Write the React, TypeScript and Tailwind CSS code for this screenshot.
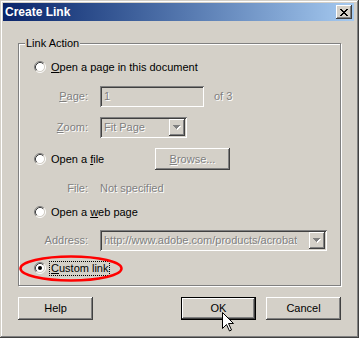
import type { ReactNode } from 'react'

const raised = 'bg-[#d4d0c8] shadow-[inset_-1px_-1px_#404040,inset_1px_1px_#fff,inset_-2px_-2px_#808080]'
const sunken = 'bg-[#d4d0c8] shadow-[inset_1px_1px_#808080,inset_-1px_-1px_#fff,inset_2px_2px_#404040,inset_-2px_-2px_#d4d0c8]'
const grayText = 'text-[#808080] [text-shadow:1px_1px_0_#fff]'

function Radio({ checked }: { checked?: boolean }) {
  return (
    <svg width="12" height="12" viewBox="0 0 12 12" className="shrink-0">
      <circle cx="6" cy="6" r="4.5" fill="#fff" />
      <path d="M2.11 9.89A5.5 5.5 0 0 1 9.89 2.11" fill="none" stroke="#808080" />
      <path d="M9.89 2.11A5.5 5.5 0 0 1 2.11 9.89" fill="none" stroke="#fff" />
      <path d="M2.82 9.18A4.5 4.5 0 0 1 9.18 2.82" fill="none" stroke="#404040" />
      <path d="M9.18 2.82A4.5 4.5 0 0 1 2.82 9.18" fill="none" stroke="#d4d0c8" />
      {checked && <circle cx="6" cy="6" r="2" fill="#000" />}
    </svg>
  )
}

function DropArrow() {
  const tri = 'h7v1h-1v1h-1v1h-1v1h-1v-1h-1v-1h-1v-1h-1z'
  return (
    <div className={`w-4 h-[17px] flex items-center justify-center shrink-0 ${raised}`}>
      <svg width="8" height="5" viewBox="0 0 8 5">
        <path d={`M1 1${tri}`} fill="#fff" />
        <path d={`M0 0${tri}`} fill="#808080" />
      </svg>
    </div>
  )
}

function CloseX() {
  const rows = ['xx....xx', '.xx..xx.', '..xxxx..', '...xx...', '..xxxx..', '.xx..xx.', 'xx....xx']
  return (
    <svg width="8" height="7" viewBox="0 0 8 7" shapeRendering="crispEdges">
      {rows.flatMap((r, y) =>
        r.split('').map((c, x) => (c === 'x' ? <rect key={`${x}-${y}`} x={x} y={y} width="1" height="1" fill="#000" /> : null)),
      )}
    </svg>
  )
}

function Label({ children, w = 'w-[69px]' }: { children: ReactNode; w?: string }) {
  return <div className={`${w} text-right ${grayText}`}>{children}</div>
}

export default function App() {
  return (
    <div className="w-[359px] h-[338px] bg-[#d4d0c8] font-['Liberation_Sans',Arial,sans-serif] text-[11px] leading-[13px] text-black shadow-[inset_-1px_-1px_#404040,inset_1px_1px_#d4d0c8,inset_-2px_-2px_#808080,inset_2px_2px_#fff] pt-[3px] pl-[3px] pr-[5px] flex flex-col">
      {/* Title bar */}
      <div className="h-[18px] flex items-center justify-between bg-gradient-to-r from-[#0a246a] to-[#a6caf0] pl-[2px] pr-[2px]">
        <span className="text-white font-bold text-[12px]">Create Link</span>
        <div className={`w-4 h-[14px] flex items-center justify-center ${raised}`}>
          <CloseX />
        </div>
      </div>

      <div className="pl-[15px] pr-[13px]">
        {/* Group box */}
        <div className="relative mt-[22px] border border-[#808080] shadow-[inset_1px_1px_#fff,1px_1px_#fff] pt-[15px] pb-[9px]">
          <span className="absolute -top-[7px] left-[6px] bg-[#d4d0c8] px-[1px]">Link Action</span>

          <div className="h-4 flex items-center pl-[15px] gap-[5px]">
            <Radio />
            <span><span className="underline">O</span>pen a page in this document</span>
          </div>

          <div className="mt-[11px] h-[21px] flex items-center">
            <Label><span className="underline">P</span>age:</Label>
            <div className={`ml-[12px] w-[104px] h-[21px] flex items-center pl-[4px] ${sunken} ${grayText}`}>1</div>
            <span className={`ml-[10px] ${grayText}`}>of 3</span>
          </div>

          <div className="mt-[10px] h-[21px] flex items-center">
            <Label><span className="underline">Z</span>oom:</Label>
            <div className={`ml-[12px] w-[87px] h-[21px] flex items-center justify-between pl-[4px] pr-[2px] ${sunken}`}>
              <span className={grayText}>Fit Page</span>
              <DropArrow />
            </div>
          </div>

          <div className="mt-[10px] h-[22px] flex items-center">
            <div className="w-[136px] flex items-center pl-[15px] gap-[5px]">
              <Radio />
              <span>Open a <span className="underline">f</span>ile</span>
            </div>
            <div className={`w-[75px] h-[22px] flex items-center justify-center ${raised} ${grayText}`}>
              <span><span className="underline">B</span>rowse...</span>
            </div>
          </div>

          <div className="mt-[10px] h-4 flex items-center">
            <Label>File:</Label>
            <span className={`ml-[12px] ${grayText}`}>Not specified</span>
          </div>

          <div className="mt-[8px] h-4 flex items-center pl-[15px] gap-[5px]">
            <Radio />
            <span>Open a <span className="underline">w</span>eb page</span>
          </div>

          <div className="mt-[10px] h-[21px] flex items-center">
            <Label>Address:</Label>
            <div className={`ml-[12px] w-[227px] h-[21px] flex items-center justify-between pl-[4px] pr-[2px] ${sunken}`}>
              <span className={`overflow-hidden whitespace-nowrap ${grayText}`}>http://www.adobe.com/products/acrobat</span>
              <DropArrow />
            </div>
          </div>

          <div className="relative mt-[9px] h-4 flex items-center pl-[15px] gap-[4px]">
            <Radio checked />
            <span className="outline-1 outline-dotted outline-black px-[1px]">
              <span className="underline">C</span>ustom link
            </span>
            <svg className="absolute left-0 -top-[5px] pointer-events-none" width="105" height="27" viewBox="0 0 105 27">
              <ellipse cx="52" cy="13.5" rx="50.5" ry="12" fill="none" stroke="#ff0000" strokeWidth="2.5" />
            </svg>
          </div>
        </div>

        {/* Buttons */}
        <div className="mt-[11px] flex items-center justify-between pr-[0px]">
          <div className={`w-[75px] h-[23px] flex items-center justify-center ${raised}`}>Help</div>
          <div className="flex gap-[10px]">
            <div className="relative w-[75px] h-[23px] border border-black">
              <div className={`w-full h-full flex items-center justify-center ${raised}`}>OK</div>
              <svg className="absolute left-[40px] top-[14px] pointer-events-none" width="12" height="20" viewBox="0 0 12 20">
                <path d="M0.5 0.5V16.5L4.5 12.5L7.5 19L9.5 18L6.5 11.5H11.5Z" fill="#fff" stroke="#000" strokeLinejoin="miter" />
              </svg>
            </div>
            <div className={`w-[75px] h-[23px] flex items-center justify-center ${raised}`}>Cancel</div>
          </div>
        </div>
      </div>
    </div>
  )
}
